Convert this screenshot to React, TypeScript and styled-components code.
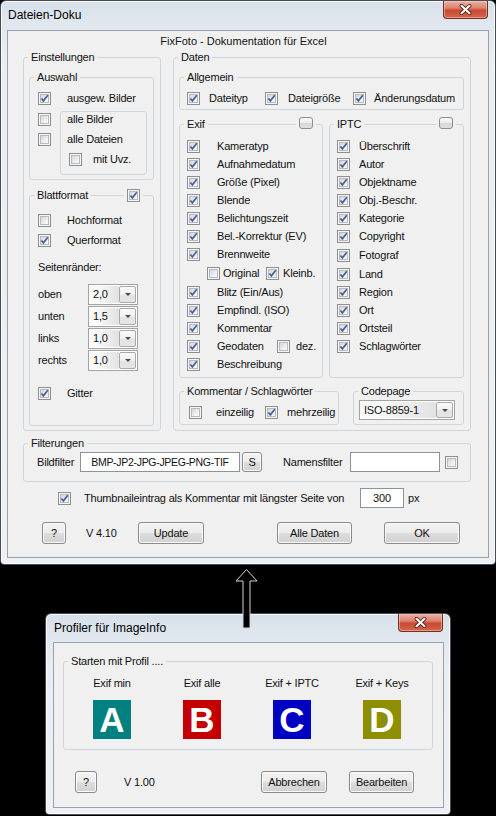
import React from "react";
import styled, { createGlobalStyle } from "styled-components";

const GlobalStyle = createGlobalStyle`
  * { box-sizing: border-box; }
  html, body { margin: 0; padding: 0; background: #000; }
  body {
    font-family: "Liberation Sans", Arial, sans-serif;
    font-size: 11px;
    letter-spacing: -0.2px;
    color: #111;
  }
  #root { width: 496px; height: 816px; }
`;

const Page = styled.div`
  position: relative;
  width: 496px;
  height: 816px;
  overflow: hidden;
  background: #000;
  display: flex;
  flex-direction: column;
`;

const Window = styled.div<{ $w: number; $h: number; $ml?: number; $pl: number }>`
  flex: none;
  width: ${(p) => p.$w}px;
  height: ${(p) => p.$h}px;
  margin-left: ${(p) => p.$ml ?? 0}px;
  border: 1px solid #474c52;
  border-radius: 6px 6px 4px 4px;
  background: linear-gradient(#d6e0ea 0px, #e2e8ef 26px, #e9eef3 60px, #edf1f5 100%);
  box-shadow: inset 0 0 0 1px rgba(255, 255, 255, 0.8);
  padding: 0 6px 6px ${(p) => p.$pl}px;
  display: flex;
  flex-direction: column;
`;

const TitleBar = styled.div<{ $h: number }>`
  flex: none;
  height: ${(p) => p.$h}px;
  display: flex;
  justify-content: space-between;
  align-items: flex-start;
`;

const TitleText = styled.div`
  margin: 7px 0 0 1px;
  font-size: 12px;
  letter-spacing: 0;
  line-height: 14px;
  white-space: nowrap;
  color: #000;
`;

const CloseButton = styled.div`
  flex: none;
  width: 45px;
  height: 18px;
  margin-right: 1px;
  border: 1px solid #70302a;
  border-top: none;
  border-radius: 0 0 4px 4px;
  background: linear-gradient(#eab0a3 0%, #dc8470 40%, #c84a33 55%, #d4654a 100%);
  box-shadow: inset 0 0 0 1px rgba(255, 220, 210, 0.45);
  display: flex;
  align-items: center;
  justify-content: center;
`;

const CloseGlyph = styled.svg`
  width: 13px;
  height: 11px;
`;

const Client = styled.div<{ $pad: string }>`
  flex: 1 1 auto;
  min-height: 0;
  background: #f0f0f0;
  border: 1px solid #99a2ac;
  display: flex;
  flex-direction: column;
  padding: ${(p) => p.$pad};
`;

const Heading = styled.div`
  flex: none;
  margin-top: 3px;
  line-height: 14px;
  letter-spacing: 0;
  text-align: center;
  padding-right: 7px;
  white-space: nowrap;
`;

const HRow = styled.div<{ $mt?: number; $gap?: number }>`
  flex: none;
  display: flex;
  align-items: stretch;
  margin-top: ${(p) => p.$mt ?? 0}px;
  gap: ${(p) => p.$gap ?? 0}px;
`;

/* ---------- group boxes ---------- */

const GroupWrap = styled.div<{ $w?: number; $grow?: boolean; $mt?: number; $ml?: number }>`
  position: relative;
  display: flex;
  flex-direction: column;
  ${(p) => (p.$w ? `width: ${p.$w}px; flex: none;` : "")}
  ${(p) => (p.$grow ? "flex: 1 1 auto; min-width: 0;" : "")}
  margin-top: ${(p) => p.$mt ?? 0}px;
  margin-left: ${(p) => p.$ml ?? 0}px;
`;

const GroupFrame = styled.fieldset`
  flex: 1 1 auto;
  margin: 0;
  padding: 0;
  min-width: 0;
  border: 1px solid #d0d5da;
  border-radius: 3px;
  display: flex;
  flex-direction: column;
`;

const GroupLegend = styled.legend`
  margin-left: 4px;
  padding: 0 3px;
  height: 14px;
  line-height: 14px;
  white-space: nowrap;
`;

const GroupBody = styled.div<{ $pad: string }>`
  flex: 1 1 auto;
  display: flex;
  flex-direction: column;
  padding: ${(p) => p.$pad};
`;

const CornerSlot = styled.div<{ $top: number; $left?: number; $right?: number }>`
  position: absolute;
  top: ${(p) => p.$top}px;
  ${(p) => (p.$left !== undefined ? `left: ${p.$left}px;` : "")}
  ${(p) => (p.$right !== undefined ? `right: ${p.$right}px;` : "")}
  padding: 0 3px;
  background: #f0f0f0;
  display: flex;
`;

const SubBox = styled.div`
  flex: 1 1 auto;
  border: 1px solid #d0d5da;
  border-radius: 3px;
  padding: 0 4px 8px 6px;
  display: flex;
  flex-direction: column;
  gap: 6px;
`;

const CheckColumn = styled.div`
  flex: none;
  display: flex;
  flex-direction: column;
  gap: 6px;
  padding-top: 1px;
`;

const Split = styled.div<{ $mt: number; $gap: number }>`
  display: flex;
  margin-top: ${(p) => p.$mt}px;
  gap: ${(p) => p.$gap}px;
`;

const Stack = styled.div<{ $mt: number }>`
  display: flex;
  flex-direction: column;
  margin-top: ${(p) => p.$mt}px;
`;

/* ---------- small controls ---------- */

const Row = styled.div<{ $h: number; $gap?: number; $pl?: number; $mt?: number }>`
  flex: none;
  display: flex;
  align-items: center;
  height: ${(p) => p.$h}px;
  gap: ${(p) => p.$gap ?? 0}px;
  padding-left: ${(p) => p.$pl ?? 0}px;
  margin-top: ${(p) => p.$mt ?? 0}px;
  white-space: nowrap;
`;

const Text = styled.span<{ $w?: number; $ml?: number }>`
  flex: none;
  display: inline-block;
  ${(p) => (p.$w ? `width: ${p.$w}px;` : "")}
  margin-left: ${(p) => p.$ml ?? 0}px;
  line-height: 14px;
  white-space: nowrap;
`;

const BoxFrame = styled.span<{ $ml?: number }>`
  position: relative;
  flex: none;
  display: inline-block;
  width: 13px;
  height: 13px;
  margin-left: ${(p) => p.$ml ?? 0}px;
  border: 1px solid #8e8f8f;
  background: #f6f6f6;
  &::before {
    content: "";
    position: absolute;
    left: 1px;
    top: 1px;
    right: 1px;
    bottom: 1px;
    border: 1px solid #b7bbc1;
    background: linear-gradient(135deg, #d3d6da 0%, #eceef0 60%, #fbfbfb 100%);
  }
`;

const CheckMark = styled.svg`
  position: absolute;
  left: 0;
  top: 0;
  width: 11px;
  height: 11px;
`;

function CheckBox({ on, ml }: { on?: boolean; ml?: number }) {
  return (
    <BoxFrame $ml={ml}>
      {on && (
        <CheckMark viewBox="0 0 11 11">
          <path d="M2.4 5.5 L4.4 7.9 L8.8 2.3" fill="none" stroke="#4a5f95" strokeWidth="1.7" />
        </CheckMark>
      )}
    </BoxFrame>
  );
}

const ComboFrame = styled.div<{ $w: number; $h: number }>`
  flex: none;
  display: flex;
  width: ${(p) => p.$w}px;
  height: ${(p) => p.$h}px;
  border: 1px solid #a3a3a3;
  background: #fff;
  padding: 1px;
`;

const ComboValue = styled.div`
  flex: 1 1 auto;
  display: flex;
  align-items: center;
  padding-left: 3px;
  background: linear-gradient(to right, #fafafa 20%, #e2e2e2 100%);
`;

const ComboButton = styled.div`
  flex: none;
  width: 17px;
  border: 1px solid #a9a9a9;
  border-radius: 2px;
  background: linear-gradient(#fbfbfb, #f0f0f0 50%, #e2e2e2 51%, #e6e6e6);
  display: flex;
  align-items: center;
  justify-content: center;
`;

const ComboArrow = styled.span`
  width: 0;
  height: 0;
  border-left: 3px solid transparent;
  border-right: 3px solid transparent;
  border-top: 3px solid #4a4a4a;
`;

function Combo({ w, h, value }: { w: number; h: number; value: string }) {
  return (
    <ComboFrame $w={w} $h={h}>
      <ComboValue>{value}</ComboValue>
      <ComboButton>
        <ComboArrow />
      </ComboButton>
    </ComboFrame>
  );
}

const Field = styled.div<{ $w: number; $h: number; $ml?: number; $tight?: boolean }>`
  flex: none;
  width: ${(p) => p.$w}px;
  height: ${(p) => p.$h}px;
  margin-left: ${(p) => p.$ml ?? 0}px;
  border: 1px solid #8d939a;
  background: #fff;
  display: flex;
  align-items: center;
  justify-content: center;
  white-space: nowrap;
  ${(p) => (p.$tight ? "font-size: 10.5px; letter-spacing: -0.3px;" : "")}
`;

const PushButton = styled.div<{ $w: number; $h?: number; $ml?: number }>`
  flex: none;
  width: ${(p) => p.$w}px;
  height: ${(p) => p.$h ?? 22}px;
  margin-left: ${(p) => p.$ml ?? 0}px;
  border: 1px solid #8a8a8a;
  border-radius: 3px;
  background: linear-gradient(#f3f3f3 0%, #ececec 50%, #dddddd 51%, #d1d1d1 100%);
  box-shadow: inset 0 0 0 1px #fbfbfb;
  display: flex;
  align-items: center;
  justify-content: center;
  white-space: nowrap;
`;

const MiniButton = styled.div`
  width: 14px;
  height: 12px;
  border: 1px solid #8d8d8d;
  border-radius: 3px;
  background: linear-gradient(#f8f8f8, #ececec 50%, #d8d8d8 51%, #dedede);
`;

const AllgemeinGrid = styled.div`
  display: grid;
  grid-template-columns: 78px 88px auto;
  align-items: center;
  height: 20px;
`;

const ProfileGrid = styled.div`
  display: grid;
  grid-template-columns: repeat(4, 90px);
`;

const ProfileColumn = styled.div`
  display: flex;
  flex-direction: column;
  align-items: center;
`;

const ProfileTile = styled.div<{ $bg: string }>`
  width: 38px;
  height: 39px;
  margin-top: 10px;
  background: ${(p) => p.$bg};
  color: #fff;
  font-family: "Liberation Sans", Arial, sans-serif;
  font-weight: bold;
  font-size: 35px;
  letter-spacing: 0;
  line-height: 39px;
  text-align: center;
`;

const Spacer = styled.div<{ $h: number }>`
  flex: none;
  height: ${(p) => p.$h}px;
`;

const ArrowOverlay = styled.svg`
  position: absolute;
  left: 234px;
  top: 566px;
  width: 26px;
  height: 64px;
  overflow: visible;
`;

/* ---------- helpers ---------- */

function Group({
  title,
  pad,
  w,
  grow,
  mt,
  ml,
  corner,
  children,
}: {
  title?: string;
  pad: string;
  w?: number;
  grow?: boolean;
  mt?: number;
  ml?: number;
  corner?: React.ReactNode;
  children?: React.ReactNode;
}) {
  return (
    <GroupWrap $w={w} $grow={grow} $mt={mt} $ml={ml}>
      <GroupFrame>
        {title && <GroupLegend>{title}</GroupLegend>}
        <GroupBody $pad={pad}>{children}</GroupBody>
      </GroupFrame>
      {corner}
    </GroupWrap>
  );
}

function CloseX() {
  return (
    <CloseButton>
      <CloseGlyph viewBox="0 0 13 11">
        <path d="M2.5 1.8 L10.5 9.2 M10.5 1.8 L2.5 9.2" stroke="#4a1a12" strokeWidth="3.8" strokeLinecap="round" />
        <path d="M2.5 1.8 L10.5 9.2 M10.5 1.8 L2.5 9.2" stroke="#ffffff" strokeWidth="2.2" strokeLinecap="round" />
      </CloseGlyph>
    </CloseButton>
  );
}

const exifTop = [
  "Kameratyp",
  "Aufnahmedatum",
  "Größe (Pixel)",
  "Blende",
  "Belichtungszeit",
  "Bel.-Korrektur (EV)",
  "Brennweite",
];
const exifMid = ["Blitz (Ein/Aus)", "Empfindl. (ISO)", "Kommentar"];

const iptcRows: { t: string; mt?: number }[] = [
  { t: "Überschrift" },
  { t: "Autor" },
  { t: "Objektname" },
  { t: "Obj.-Beschr." },
  { t: "Kategorie" },
  { t: "Copyright" },
  { t: "Fotograf", mt: 1 },
  { t: "Land", mt: 1 },
  { t: "Region" },
  { t: "Ort" },
  { t: "Ortsteil" },
  { t: "Schlagwörter" },
];

const margins = [
  ["oben", "2,0"],
  ["unten", "1,5"],
  ["links", "1,0"],
  ["rechts", "1,0"],
];

const profiles = [
  { label: "Exif min", letter: "A", bg: "#008080" },
  { label: "Exif alle", letter: "B", bg: "#c40000" },
  { label: "Exif + IPTC", letter: "C", bg: "#0000c2" },
  { label: "Exif + Keys", letter: "D", bg: "#8e8e00" },
];

export default function App() {
  return (
    <>
      <GlobalStyle />
      <Page>
        {/* ================= Dateien-Doku ================= */}
        <Window $w={496} $h={565} $pl={6}>
          <TitleBar $h={29}>
            <TitleText>Dateien-Doku</TitleText>
            <CloseX />
          </TitleBar>
          <Client $pad="0 17px 0 15px">
            <Heading>FixFoto - Dokumentation für Excel</Heading>

            <HRow $mt={2} $gap={12}>
              {/* Einstellungen */}
              <Group title="Einstellungen" w={138} pad="6px 6px 4px 5px">
                <Group title="Auswahl" pad="4px 6px 4px 8px">
                  <Row $h={20} $gap={16}>
                    <CheckBox on />
                    <Text>ausgew. Bilder</Text>
                  </Row>
                  <Split $mt={3} $gap={9}>
                    <CheckColumn>
                      <Row $h={14}>
                        <CheckBox />
                      </Row>
                      <Row $h={14}>
                        <CheckBox />
                      </Row>
                    </CheckColumn>
                    <SubBox>
                      <Row $h={14}>
                        <Text>alle Bilder</Text>
                      </Row>
                      <Row $h={14}>
                        <Text>alle Dateien</Text>
                      </Row>
                      <Row $h={14} $pl={2} $gap={11}>
                        <CheckBox />
                        <Text>mit Uvz.</Text>
                      </Row>
                    </SubBox>
                  </Split>
                </Group>

                <Group
                  title="Blattformat"
                  mt={8}
                  grow
                  pad="8px 6px 4px 8px"
                  corner={
                    <CornerSlot $top={1} $left={95}>
                      <CheckBox on />
                    </CornerSlot>
                  }
                >
                  <Row $h={20} $gap={16}>
                    <CheckBox />
                    <Text>Hochformat</Text>
                  </Row>
                  <Row $h={20} $gap={16}>
                    <CheckBox on />
                    <Text>Querformat</Text>
                  </Row>
                  <Row $h={20} $mt={7}>
                    <Text>Seitenränder:</Text>
                  </Row>
                  <Stack $mt={6}>
                    {margins.map(([label, value]) => (
                      <Row key={label} $h={22}>
                        <Text $w={50}>{label}</Text>
                        <Combo w={50} h={21} value={value} />
                      </Row>
                    ))}
                  </Stack>
                  <Row $h={20} $gap={16} $mt={12}>
                    <CheckBox on />
                    <Text>Gitter</Text>
                  </Row>
                </Group>
              </Group>

              {/* Daten */}
              <Group title="Daten" w={298} pad="6px 6px 5px 5px">
                <Group title="Allgemein" pad="4px 4px 1px 7px">
                  <AllgemeinGrid>
                    <Row $h={20} $gap={9}>
                      <CheckBox on />
                      <Text>Dateityp</Text>
                    </Row>
                    <Row $h={20} $gap={10}>
                      <CheckBox on />
                      <Text>Dateigröße</Text>
                    </Row>
                    <Row $h={20} $gap={8}>
                      <CheckBox on />
                      <Text>Änderungsdatum</Text>
                    </Row>
                  </AllgemeinGrid>
                </Group>

                <HRow $mt={7} $gap={6}>
                  <Group
                    title="Exif"
                    w={144}
                    pad="6px 4px 4px 7px"
                    corner={
                      <CornerSlot $top={0} $right={7}>
                        <MiniButton />
                      </CornerSlot>
                    }
                  >
                    {exifTop.map((t) => (
                      <Row key={t} $h={18} $gap={17}>
                        <CheckBox on />
                        <Text>{t}</Text>
                      </Row>
                    ))}
                    <Row $h={20} $pl={20}>
                      <CheckBox />
                      <Text $w={43} $ml={3}>
                        Original
                      </Text>
                      <CheckBox on />
                      <Text $ml={4}>Kleinb.</Text>
                    </Row>
                    {exifMid.map((t) => (
                      <Row key={t} $h={18} $gap={17}>
                        <CheckBox on />
                        <Text>{t}</Text>
                      </Row>
                    ))}
                    <Row $h={18}>
                      <CheckBox on />
                      <Text $w={60} $ml={17}>
                        Geodaten
                      </Text>
                      <CheckBox />
                      <Text $ml={6}>dez.</Text>
                    </Row>
                    <Row $h={18} $gap={17}>
                      <CheckBox on />
                      <Text>Beschreibung</Text>
                    </Row>
                  </Group>

                  <Group
                    title="IPTC"
                    grow
                    pad="6px 4px 4px 7px"
                    corner={
                      <CornerSlot $top={0} $right={8}>
                        <MiniButton />
                      </CornerSlot>
                    }
                  >
                    {iptcRows.map((r) => (
                      <Row key={r.t} $h={18} $gap={9} $mt={r.mt}>
                        <CheckBox on />
                        <Text>{r.t}</Text>
                      </Row>
                    ))}
                  </Group>
                </HRow>

                <HRow $mt={6} $gap={14}>
                  <Group title="Kommentar / Schlagwörter" w={160} pad="4px 4px 2px 9px">
                    <Row $h={20}>
                      <CheckBox />
                      <Text $w={49} $ml={14}>
                        einzeilig
                      </Text>
                      <CheckBox on />
                      <Text $ml={9}>mehrzeilig</Text>
                    </Row>
                  </Group>
                  <Group title="Codepage" grow pad="2px 7px 4px 5px">
                    <Combo w={96} h={20} value="ISO-8859-1" />
                  </Group>
                </HRow>
              </Group>
            </HRow>

            {/* Filterungen */}
            <Group title="Filterungen" mt={5} pad="2px 8px 9px 13px">
              <Row $h={20}>
                <Text $w={43}>Bildfilter</Text>
                <Field $w={160} $h={20} $tight>
                  BMP-JP2-JPG-JPEG-PNG-TIF
                </Field>
                <PushButton $w={20} $h={20} $ml={2}>
                  S
                </PushButton>
                <Text $w={67} $ml={21}>
                  Namensfilter
                </Text>
                <Field $w={90} $h={20} />
                <CheckBox ml={5} />
              </Row>
            </Group>

            <Row $h={20} $mt={6} $pl={35}>
              <CheckBox on />
              <Text $w={276} $ml={13}>
                Thumbnaileintrag als Kommentar mit längster Seite von
              </Text>
              <Field $w={44} $h={20}>
                300
              </Field>
              <Text $ml={4}>px</Text>
            </Row>

            <Row $h={22} $mt={14} $pl={19}>
              <PushButton $w={24}>?</PushButton>
              <Text $w={52} $ml={20}>
                V 4.10
              </Text>
              <PushButton $w={66}>Update</PushButton>
              <PushButton $w={75} $ml={73}>
                Alle Daten
              </PushButton>
              <PushButton $w={76} $ml={32}>
                OK
              </PushButton>
            </Row>
          </Client>
        </Window>

        <Spacer $h={48} />

        {/* ================= Profiler ================= */}
        <Window $w={406} $h={202} $ml={45} $pl={7}>
          <TitleBar $h={28}>
            <TitleText>Profiler für ImageInfo</TitleText>
            <CloseX />
          </TitleBar>
          <Client $pad="0">
            <Group title="Starten mit Profil  ...." w={370} mt={11} ml={9} pad="8px 0 10px 3px">
              <ProfileGrid>
                {profiles.map((p) => (
                  <ProfileColumn key={p.letter}>
                    <Text>{p.label}</Text>
                    <ProfileTile $bg={p.bg}>{p.letter}</ProfileTile>
                  </ProfileColumn>
                ))}
              </ProfileGrid>
            </Group>
            <Row $h={22} $mt={21} $pl={21}>
              <PushButton $w={22}>?</PushButton>
              <Text $w={137} $ml={27}>
                V 1.00
              </Text>
              <PushButton $w={66}>Abbrechen</PushButton>
              <PushButton $w={65} $ml={22}>
                Bearbeiten
              </PushButton>
            </Row>
          </Client>
        </Window>

        <ArrowOverlay viewBox="0 0 26 64">
          <polygon
            points="12.5,3.5 23,15 16,15 16,62 9,62 9,15 2,15"
            fill="#000"
            stroke="#d4d4d4"
            strokeWidth="1"
          />
        </ArrowOverlay>
      </Page>
    </>
  );
}
